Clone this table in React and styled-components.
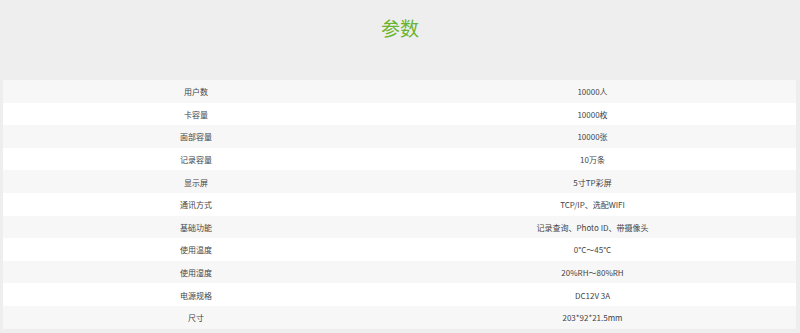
import React from 'react'
import styled, { createGlobalStyle } from 'styled-components'

const specs = [
  ['用户数', '10000人'],
  ['卡容量', '10000枚'],
  ['面部容量', '10000张'],
  ['记录容量', '10万条'],
  ['显示屏', '5寸TP彩屏'],
  ['通讯方式', 'TCP/IP、选配WIFI'],
  ['基础功能', '记录查询、Photo ID、带摄像头'],
  ['使用温度', '0°C～45°C'],
  ['使用湿度', '20%RH～80%RH'],
  ['电源规格', 'DC12V 3A'],
  ['尺寸', '203*92*21.5mm'],
]

function App() {
  return (
    <Wrapper>
      <Global />
      <Header>
        <Title>参数</Title>
      </Header>
      <Table>
        {specs.map(([name, value], i) => (
          <Row key={name} $odd={i % 2 === 0}>
            <Cell>{name}</Cell>
            <Cell>{value}</Cell>
          </Row>
        ))}
      </Table>
    </Wrapper>
  )
}

const Global = createGlobalStyle`
body {
  margin: 0;
  background: #eeeeee;
  font-family: "Noto Sans CJK SC", "Noto Sans", sans-serif;
}
`;

const Wrapper = styled.div`
width: 800px;
height: 333px;
overflow: hidden;
`;

const Header = styled.div`
box-sizing: border-box;
height: 80px;
padding-top: 18px;
text-align: center;
`;

const Title = styled.h2`
margin: 0;
font-size: 19px;
line-height: 20px;
font-weight: 400;
color: #6ab42e;
`;

const Table = styled.div`
margin: 0 4px 0 3px;
`;

const Row = styled.div`
display: grid;
grid-template-columns: 386px 1fr;
height: 22.6px;
align-items: center;
background: ${p => (p.$odd ? '#f7f7f7' : '#ffffff')};
`;

const Cell = styled.div`
padding-top: 1px;
text-align: center;
font-size: 8px;
color: #444;
`;

export default App
